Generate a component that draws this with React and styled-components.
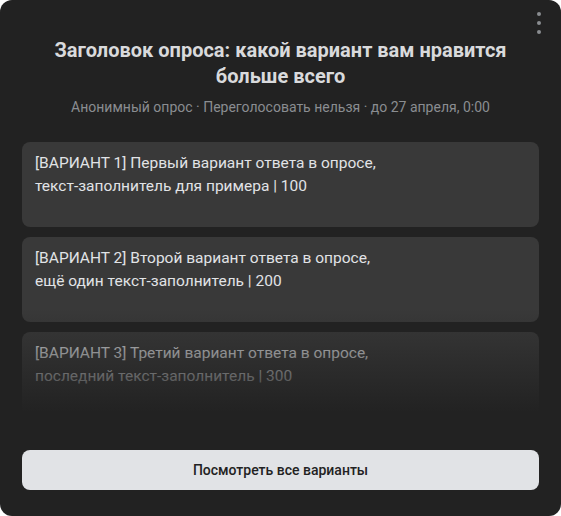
import React from "react";
import styled, { createGlobalStyle } from "styled-components";

const Global = createGlobalStyle`
  html, body { margin: 0; padding: 0; background: #ffffff; }
  body { font-family: Roboto, "Noto Sans", "Liberation Sans", sans-serif; }
`;

const Card = styled.div`
  position: relative;
  width: 561px;
  height: 516px;
  box-sizing: border-box;
  background: #222222;
  border-radius: 12px;
  padding: 37px 22px 26px;
  display: flex;
  flex-direction: column;
  color: #e1e3e6;
`;

const Menu = styled.button`
  position: absolute;
  top: 12px;
  right: 18px;
  width: 8px;
  height: 22px;
  padding: 0;
  border: 0;
  background: none;
  display: flex;
  flex-direction: column;
  align-items: center;
  justify-content: space-between;
  span { width: 4px; height: 4px; border-radius: 50%; background: #8a8d91; }
`;

const Title = styled.h2`
  margin: 0 20px;
  text-align: center;
  font-size: 20px;
  line-height: 26px;
  font-weight: 700;
  color: #d9dadc;
`;

const Meta = styled.div`
  margin-top: 10px;
  text-align: center;
  font-size: 14px;
  color: #8a8d91;
`;

const Options = styled.div`
  position: relative;
  margin-top: 27px;
  display: flex;
  flex-direction: column;
  gap: 10px;
  height: 276px;
  overflow: hidden;
  &::after {
    content: "";
    position: absolute;
    left: 0; right: 0; bottom: 0;
    height: 110px;
    background: linear-gradient(to bottom, rgba(34,34,34,0), #222222 95%);
  }
`;

const Option = styled.div`
  background: #393939;
  border-radius: 8px;
  padding: 10px 150px 10px 13px;
  font-size: 15.5px;
  line-height: 23px;
  color: #e1e3e6;
  min-height: 65px;
`;

const Button = styled.button`
  margin-top: auto;
  height: 40px;
  border: 0;
  border-radius: 8px;
  background: #e1e3e6;
  color: #222222;
  font-family: inherit;
  font-size: 14px;
  font-weight: 500;
`;

const opts = [
  "[ВАРИАНТ 1] Первый вариант ответа в опросе, текст-заполнитель для примера | 100",
  "[ВАРИАНТ 2] Второй вариант ответа в опросе, ещё один текст-заполнитель | 200",
  "[ВАРИАНТ 3] Третий вариант ответа в опросе, последний текст-заполнитель | 300",
];

export default function App() {
  return (
    <>
      <Global />
      <Card>
        <Menu aria-label="menu"><span /><span /><span /></Menu>
        <Title>Заголовок опроса: какой вариант вам нравится больше всего</Title>
        <Meta>Анонимный опрос · Переголосовать нельзя · до 27 апреля, 0:00</Meta>
        <Options>
          {opts.map((t) => <Option key={t}>{t}</Option>)}
        </Options>
        <Button>Посмотреть все варианты</Button>
      </Card>
    </>
  );
}
